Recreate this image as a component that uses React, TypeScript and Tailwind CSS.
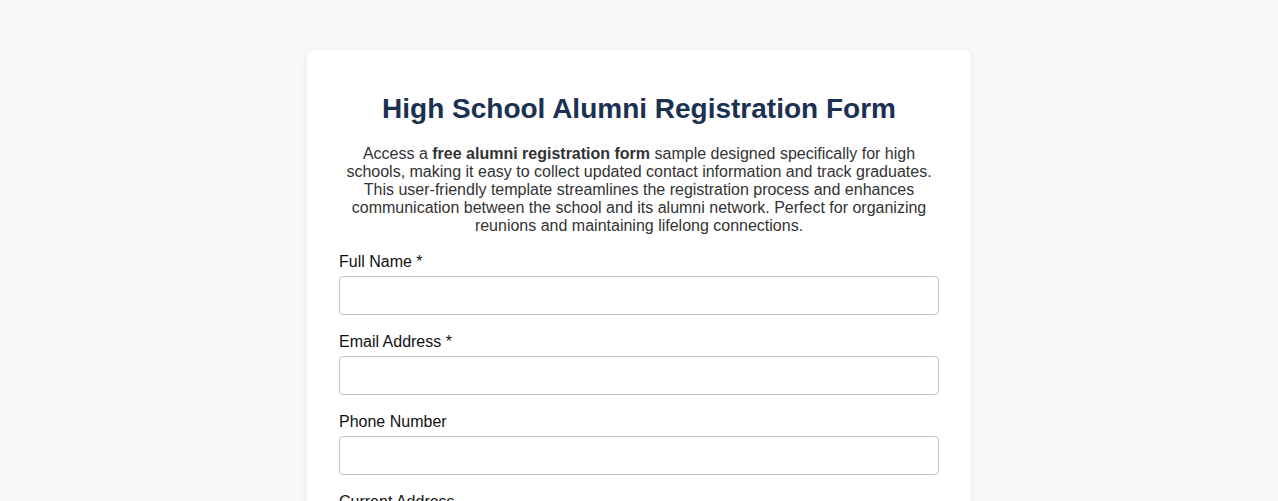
export default function App() {
  return (
    <div className="min-h-screen bg-[#f7f8fa] pt-[50px] pb-10 font-['Liberation_Sans',Arial,sans-serif]">
      <div className="mx-auto w-[664px] rounded-lg bg-white px-8 pt-[43px] pb-8 shadow-[0_2px_8px_rgba(0,0,0,0.06)]">
        <h1 className="text-center text-[28px] font-bold leading-8 text-[#1b3152]">
          High School Alumni Registration Form
        </h1>
        <p className="mt-5 mb-[18px] text-center text-base leading-[18px] text-[#333]">
          Access a <strong>free alumni registration form</strong> sample designed specifically for high schools, making it easy to collect updated contact information and track graduates. This user-friendly template streamlines the registration process and enhances communication between the school and its alumni network. Perfect for organizing reunions and maintaining lifelong connections.
        </p>
        <form className="flex flex-col gap-[18px]">
          {[
            { label: 'Full Name *', type: 'text' },
            { label: 'Email Address *', type: 'email' },
            { label: 'Phone Number', type: 'tel' },
            { label: 'Current Address', type: 'text' },
            { label: 'Graduation Year *', type: 'text' },
          ].map((f) => (
            <div key={f.label}>
              <label className="mb-[5px] block text-base leading-[18px] text-[#111]">{f.label}</label>
              <input
                type={f.type}
                className="block h-[39px] w-full rounded border border-[#c4c4c4] bg-white px-[10px] text-base outline-none"
              />
            </div>
          ))}
        </form>
      </div>
    </div>
  );
}
